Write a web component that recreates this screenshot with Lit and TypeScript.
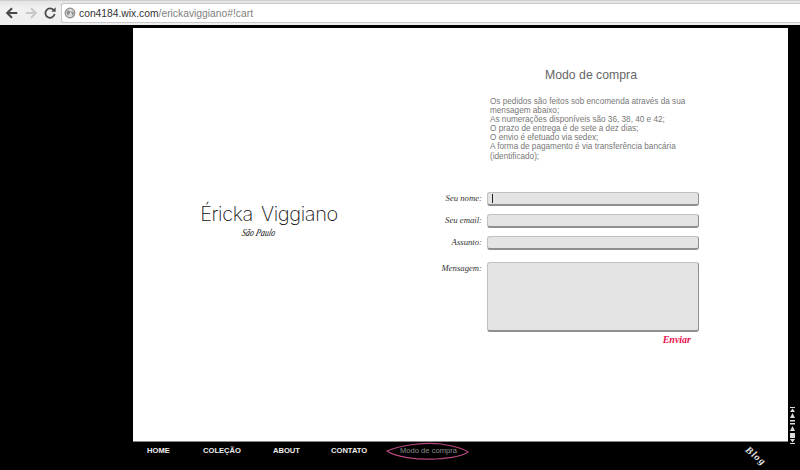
import { LitElement, html, css } from "lit";
import { customElement } from "lit/decorators.js";

@customElement("app-root")
export class AppRoot extends LitElement {
  static styles = css`
    :host { display: block; width: 800px; height: 470px; background: #000; overflow: hidden; font-family: "Liberation Sans", Arial, sans-serif; }
    .toolbar { height: 25px; box-sizing: border-box; background: linear-gradient(#e4e4e4, #f1f1f1 30%, #efefef); border-top: 1px solid #cfcfcf; display: flex; align-items: center; padding: 0 0 0 5px; }
    .nav-ico { width: 14px; height: 14px; display: block; flex: none; }
    .back { margin-right: 5px; } .fwd { margin-right: 5px; }
    .omni { margin-left: 4px; flex: 1; height: 20px; box-sizing: border-box; background: #fff; border: 1px solid #c9c9c9; border-right: none; border-radius: 3px 0 0 3px; display: flex; align-items: center; padding-left: 2px; gap: 3px; font-size: 10.300px; }
    .host { color: #333; } .path { color: #808080; }
    .stage { margin: 3px 12px 0 133px; height: 414px; box-sizing: border-box; background: #fff; border-bottom: 1px solid #888; display: flex; position: relative; }
    .brand { width: 272px; flex: none; display: flex; flex-direction: column; align-items: center; padding: 173px 0 0 0; box-sizing: border-box; }
    .logo { font-family: Inter, sans-serif; font-weight: 200; font-size: 20px; line-height: 26px; letter-spacing: -0.400px; word-spacing: 3px; color: #111; white-space: nowrap; }
    .sub { font-family: "Liberation Serif", serif; font-style: italic; font-size: 8px; line-height: 10px; color: #111; transform: skewX(-14deg) scaleY(1.300); margin-left: -20px; margin-top: 1px; }
    .panel { flex: 1; padding-top: 40px; }
    h1 { margin: 0 0 0 86px; font-size: 12.250px; font-weight: 400; line-height: 15px; color: #666; width: 200px; text-align: center; white-space: nowrap; }
    .info { margin: 14px 0 0 85px; width: 200px; font-size: 8.200px; line-height: 9.100px; color: #777; white-space: pre-line; }
    form { margin-top: 31px; display: grid; grid-template-columns: 77px 212px; column-gap: 5px; row-gap: 8px; align-items: center; }
    label { font-family: "Liberation Serif", serif; font-style: italic; font-size: 8.700px; color: #333; text-align: right; line-height: 13px; }
    .field { height: 11px; background: #e4e4e4; border: 1px solid #c0c0c0; border-bottom: 2px solid #8f8f8f; border-right: 1px solid #8f8f8f; border-radius: 3px; position: relative; }
    .caret { position: absolute; left: 4px; top: 1px; width: 1px; height: 9px; background: #222; }
    .area { height: 67px; margin-top: 4px; }
    .msg-l { align-self: start; margin-top: 4px; }
    .send { grid-column: 2; justify-self: end; margin: -7px 8px 0 0; font-family: "Liberation Serif", serif; font-style: italic; font-size: 10px; line-height: 13px; font-weight: 700; color: #e8104f; }
    .side { position: absolute; right: -7px; bottom: -3px; width: 5px; display: flex; flex-direction: column; gap: 1.500px; }
    .side svg { display: block; width: 5px; height: 5px; }
    .menu { height: 28px; padding-left: 147px; position: relative; display: flex; color: #eee; font-size: 7.600px; font-weight: 700; }
    .menu span { white-space: nowrap; line-height: 10px; margin-top: 4px; }
    .m1 { width: 56px; } .m2 { width: 70px; } .m3 { width: 58px; } .m4 { width: 69px; }
    .m5 { font-weight: 400; color: #8c8c8c; }
    .ring { position: absolute; left: 386px; top: 0; width: 83px; height: 19px; }
    .blog { position: absolute; left: 744px; top: 9px; font-family: "Liberation Serif", serif; font-style: italic; font-weight: 700; font-size: 10px; letter-spacing: 1px; color: #e6e6e6; transform: rotate(40deg); line-height: 10px; }
  `;

  render() {
    const glyphs = ["M0 0h5v1H0zM2.500 1.500L5 5H0z", "M2.500 0L5 5H0z", "M0 0h5v1.500H0zM0 3h5v1.500H0z", "M2.500 0L5 5H0z", "M0 0h5v5H0z", "M0 0h5L2.500 3.500zM0 4h5v1H0z"];
    return html`
      <div class="toolbar">
        <svg class="nav-ico back" viewBox="0 0 16 16"><path d="M8 2.500L2.500 8 8 13.500M3 8h11" fill="none" stroke="#4a4a4a" stroke-width="2.400"/></svg>
        <svg class="nav-ico fwd" viewBox="0 0 16 16"><path d="M8 2.500L13.500 8 8 13.500M13 8H2" fill="none" stroke="#c8c8c8" stroke-width="2.400"/></svg>
        <svg class="nav-ico" viewBox="0 0 16 16"><path d="M12.500 5.200A5.300 5.300 0 1 0 13.300 9" fill="none" stroke="#4a4a4a" stroke-width="2"/><path d="M9.500 6.500h5v-5z" fill="#4a4a4a"/></svg>
        <div class="omni">
          <svg width="12" height="12" viewBox="0 0 16 16"><circle cx="8" cy="8" r="6.500" fill="#d8d8d8" stroke="#8a8a8a" stroke-width="1.500"/><path d="M4 5c2-1 3 0 4 1s0 2-1 3-1 3-2 2-2-4-1-6zm6 1c2-1 3 1 3 3s-2 3-2 2 0-2-1-3 0-2 0-2z" fill="#8f8f8f"/></svg>
          <span><span class="host">con4184.wix.com</span><span class="path">/erickaviggiano#!cart</span></span>
        </div>
      </div>
      <div class="stage">
        <div class="brand">
          <div class="logo">Éricka Viggiano</div>
          <div class="sub">São Paulo</div>
        </div>
        <div class="panel">
          <h1>Modo de compra</h1>
          <div class="info">Os pedidos são feitos sob encomenda através da sua mensagem abaixo;
As numerações disponíveis são 36, 38, 40 e 42;
O prazo de entrega é de sete a dez dias;
O envio é efetuado via sedex;
A forma de pagamento é via transferência bancária (identificado);</div>
          <form>
            <label>Seu nome:</label><div class="field"><div class="caret"></div></div>
            <label>Seu email:</label><div class="field"></div>
            <label>Assunto:</label><div class="field"></div>
            <label class="msg-l">Mensagem:</label><div class="field area"></div>
            <div class="send">Enviar</div>
          </form>
        </div>
        <div class="side">
          ${glyphs.map((d) => html`<svg viewBox="0 0 5 5"><path d="${d}" fill="#ddd"/></svg>`)}
        </div>
      </div>
      <div class="menu">
        <span class="m1">HOME</span><span class="m2">COLEÇÃO</span><span class="m3">ABOUT</span><span class="m4">CONTATO</span><span class="m5">Modo de compra</span>
        <svg class="ring" viewBox="0 0 83 19"><path d="M1 9C14 3 40 0 55 2c12 2 22 4 27 8-4 3-16 6-32 7-20 1-40-2-49-8z" fill="none" stroke="#b5487e" stroke-width="1.200"/></svg>
        <div class="blog">Blog</div>
      </div>
    `;
  }
}
